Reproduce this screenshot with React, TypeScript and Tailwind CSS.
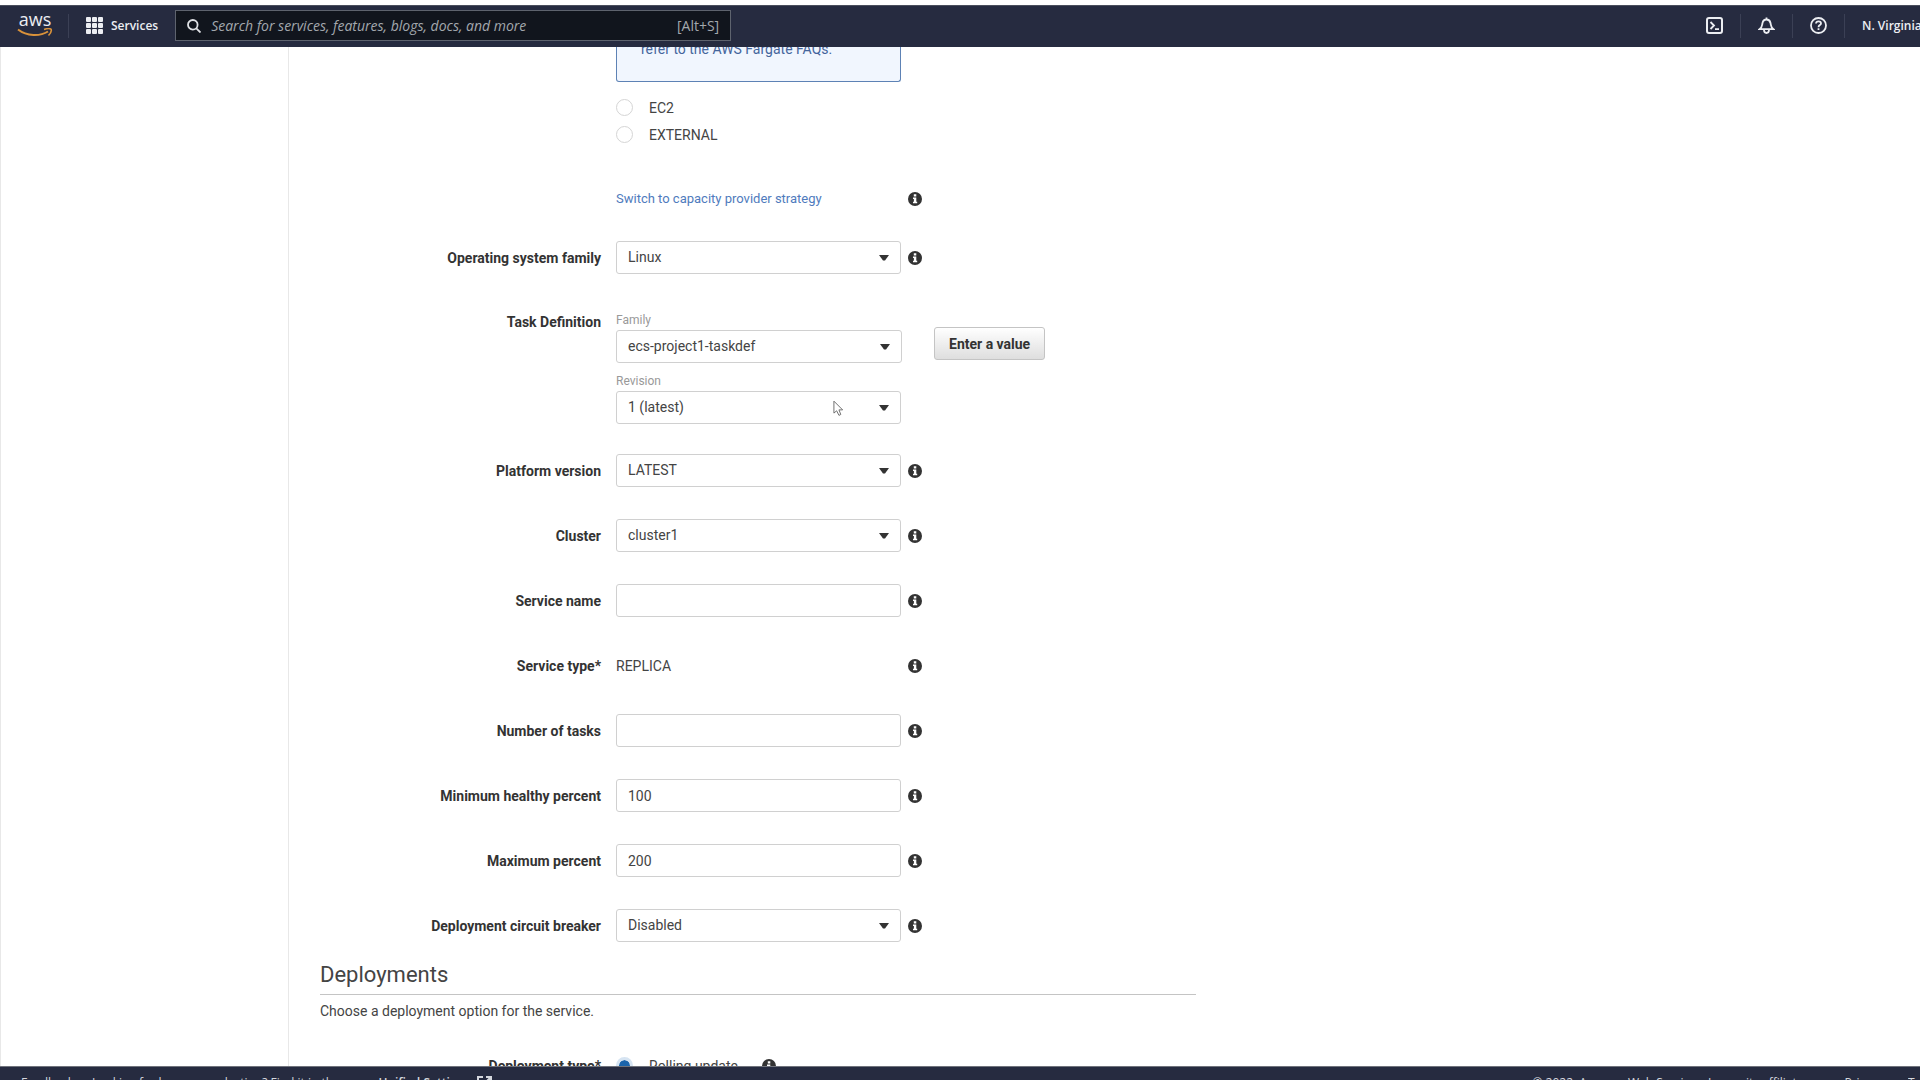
import type { ReactNode } from "react";
import clsx from "clsx";

// ─── Data ─────────────────────────────────────────────────────────────────────

type Field = {
  id: string;
  label: string;
  kind: "select" | "input" | "text";
  value: string;
};

const FIELDS: Field[] = [
  { id: "platform", label: "Platform version", kind: "select", value: "LATEST" },
  { id: "cluster", label: "Cluster", kind: "select", value: "cluster1" },
  { id: "service-name", label: "Service name", kind: "input", value: "" },
  { id: "service-type", label: "Service type*", kind: "text", value: "REPLICA" },
  { id: "tasks", label: "Number of tasks", kind: "input", value: "" },
  { id: "min-percent", label: "Minimum healthy percent", kind: "input", value: "100" },
  { id: "max-percent", label: "Maximum percent", kind: "input", value: "200" },
  { id: "breaker", label: "Deployment circuit breaker", kind: "select", value: "Disabled" },
];

// ─── Icons ────────────────────────────────────────────────────────────────────

function AwsLogo() {
  return (
    <span className="flex w-[36px] flex-col items-center">
      <span className="h-[14px] text-[18px] leading-[10px] font-medium">aws</span>
      <svg viewBox="0 0 36 10" className="h-[10px] w-[36px]" fill="none" aria-hidden="true">
        <path d="M1 1.500C10 8.500 23 8.500 31 3.500" stroke="#d9923a" strokeWidth="2" />
        <path d="M27 1.500C30 0.500 33 0.500 34 1.200C34.600 2.500 33.500 5.500 31.500 7.500" stroke="#d9923a" strokeWidth="1.600" />
      </svg>
    </span>
  );
}

function InfoIcon() {
  return (
    <svg viewBox="0 0 14 14" className="size-[14px] shrink-0" aria-hidden="true">
      <circle cx="7" cy="7" r="7" fill="#333" />
      <path d="M5.800 2.300H8.300V4.400H5.800ZM5 5.400H8.300V9.800H9.200V11.300H5V9.800H5.900V6.900H5Z" fill="#fff" />
    </svg>
  );
}

function InfoButton({ about }: { about: string }) {
  return (
    <button type="button" aria-label={`About ${about}`} className="flex shrink-0">
      <InfoIcon />
    </button>
  );
}

function GridIcon() {
  return (
    <svg viewBox="0 0 17 17" className="size-[17px]" fill="currentColor" aria-hidden="true">
      {[0, 6, 12].map((y) =>
        [0, 6, 12].map((x) => <rect key={`${x}-${y}`} x={x} y={y} width="5" height="5" rx="1" />)
      )}
    </svg>
  );
}

// ─── Form pieces ──────────────────────────────────────────────────────────────

function SelectBox({ id, value, wide }: { id: string; value: string; wide?: boolean }) {
  return (
    <div className={clsx("relative shrink-0", wide ? "w-[286px]" : "w-[285px]")}>
      <select
        id={id}
        defaultValue={value}
        className="block h-[33px] w-full appearance-none rounded-[3px] border border-[#d0d0d0] bg-white pr-8 pb-px pl-[11px] text-[#444]"
      >
        <option>{value}</option>
      </select>
      <svg
        viewBox="0 0 10 6"
        className="pointer-events-none absolute top-[14px] right-3 h-[6px] w-[10px]"
        aria-hidden="true"
      >
        <path d="M0 0H10L6 5.500H4Z" fill="#333" />
      </svg>
    </div>
  );
}

function Row({ label, htmlFor, children }: { label: string; htmlFor?: string; children: ReactNode }) {
  return (
    <div className="flex h-[33px] items-center gap-[7px]">
      <label htmlFor={htmlFor} className="mr-2 w-[281px] shrink-0 text-right font-bold text-[#333]">
        {label}
      </label>
      {children}
    </div>
  );
}

function FieldRow({ field }: { field: Field }) {
  return (
    <Row label={field.label} htmlFor={field.id}>
      {field.kind === "select" && <SelectBox id={field.id} value={field.value} />}
      {field.kind === "input" && (
        <input
          id={field.id}
          type="text"
          defaultValue={field.value}
          className="h-[33px] w-[285px] rounded-[3px] border border-[#d0d0d0] px-[11px] text-[#444]"
        />
      )}
      {field.kind === "text" && (
        <output id={field.id} className="w-[285px]">
          {field.value}
        </output>
      )}
      <InfoButton about={field.label} />
    </Row>
  );
}

function Radio({ label, name, checked }: { label: string; name: string; checked?: boolean }) {
  return (
    <label className="flex h-[27px] items-center gap-4">
      <input
        type="radio"
        name={name}
        defaultChecked={checked}
        className="size-[17px] appearance-none rounded-full border border-[#d5d5d5] bg-white checked:border-[3px] checked:border-[#d6e4f2] checked:bg-[#1b64ab] checked:bg-clip-padding"
      />
      {label}
    </label>
  );
}

// ─── Page chrome ──────────────────────────────────────────────────────────────

function Header() {
  return (
    <header className="flex h-[42px] shrink-0 items-center border-t border-[#4a4e5c] bg-[#262b40] pb-[2px] font-['Open_Sans',sans-serif] text-[#eceef2]">
      <a href="#" aria-label="AWS home" className="ml-[17px]">
        <AwsLogo />
      </a>
      <span className="ml-[15px] h-6 w-px bg-[#3b4055]" />
      <button type="button" className="ml-[17px] flex items-center gap-2 text-[12px] font-semibold">
        <GridIcon />
        Services
      </button>
      <div className="ml-[17px] flex h-[31px] w-[556px] shrink-0 items-center border border-[#5e636e] bg-[#11151d] px-[11px]">
        <svg viewBox="0 0 14 14" className="size-[14px] shrink-0" fill="none" stroke="#e0e2e6" strokeWidth="1.800" aria-hidden="true">
          <circle cx="5.800" cy="5.800" r="4.800" />
          <path d="M9.300 9.300L13.500 13.500" />
        </svg>
        <input
          type="search"
          aria-label="Search"
          placeholder="Search for services, features, blogs, docs, and more"
          className="ml-[10px] min-w-0 flex-1 bg-transparent text-[14px] placeholder:text-[#a3a8ad] placeholder:italic"
        />
        <span className="text-[14px] text-[#a3a8ad]">[Alt+S]</span>
      </div>
      <div className="ml-auto flex shrink-0 items-center">
        <button type="button" aria-label="CloudShell">
          <svg viewBox="0 0 17 17" className="size-[17px]" fill="none" stroke="currentColor" strokeWidth="2" aria-hidden="true">
            <rect x="1" y="1" width="15" height="15" rx="2" />
            <path d="M4.500 5L8 8.500L4.500 12M9 12.200H13" strokeWidth="1.800" />
          </svg>
        </button>
        <span className="mx-[17px] h-6 w-px bg-[#3b4055]" />
        <button type="button" aria-label="Notifications">
          <svg viewBox="0 0 17 17" className="size-[17px]" fill="none" stroke="currentColor" strokeWidth="1.800" aria-hidden="true">
            <path d="M8.500 0.500V2M1.500 12.200C4.500 10 4 8 4.500 6C5 3.800 6.500 2.500 8.500 2.500S12 3.800 12.500 6C13 8 12.500 10 15.500 12.200Z" />
            <path d="M6 13C6.200 17 10.800 17 11 13" />
          </svg>
        </button>
        <span className="mx-[17px] h-6 w-px bg-[#3b4055]" />
        <button type="button" aria-label="Help">
          <svg viewBox="0 0 17 17" className="size-[17px]" fill="none" stroke="currentColor" strokeWidth="1.800" aria-hidden="true">
            <circle cx="8.500" cy="8.500" r="7.500" />
            <path d="M6 6.500C6.200 3.500 11 3.700 11 6.400C11 8.200 8.500 8 8.500 10.200M8.500 11.300V13.100" />
          </svg>
        </button>
        <span className="mx-[17px] h-6 w-px bg-[#3b4055]" />
        <button type="button" className="w-[58px] overflow-hidden text-left text-[12px] font-semibold whitespace-nowrap">
          N. Virginia
        </button>
      </div>
    </header>
  );
}

function Footer() {
  return (
    <footer className="h-[14px] shrink-0 overflow-hidden border-t border-[#70737c] bg-[#262b40] font-['Open_Sans',sans-serif] text-[12px] text-[#d5d8de]">
      <div className="flex h-8 items-center whitespace-nowrap">
        <a href="#" className="ml-[21px]">Feedback</a>
        <span className="ml-[18px]">Looking for language selection? Find it in the new</span>
        <a href="#" className="ml-3 flex items-center gap-[7px] font-semibold">
          Unified Settings
          <svg viewBox="0 0 15 15" className="size-[15px]" fill="none" stroke="currentColor" strokeWidth="2" aria-hidden="true">
            <path d="M6 1H1V14H14V9M9 1H14V6M14 1L7 8" />
          </svg>
        </a>
        <span className="ml-auto">© 2022, Amazon Web Services, Inc. or its affiliates.</span>
        <a href="#" className="ml-8">Privacy</a>
        <a href="#" className="ml-6 w-3 overflow-hidden">Terms</a>
      </div>
    </footer>
  );
}

// ─── Main Component ───────────────────────────────────────────────────────────

export default function App() {
  return (
    <div className="flex h-screen flex-col overflow-hidden bg-white pt-[5px] font-[Roboto,sans-serif] text-[14px] leading-5 text-[#444]">
      <Header />

      <div className="flex min-h-0 flex-1 overflow-hidden">
        <aside className="w-[289px] shrink-0 border-r border-l border-[#e8e8e8]" />

        <main className="min-w-0 flex-1 overflow-hidden pl-[31px]">
          {/* Launch type: tail of the Fargate notice and the remaining options */}
          <div className="flex flex-col pl-[296px]">
            <div className="flex h-[35px] w-[285px] flex-col justify-end overflow-hidden rounded-b-[3px] border border-t-0 border-[#5d82b5] bg-[#f1f6fe] px-6 pb-[22px] text-[#44659c]">
              <p>refer to the AWS Fargate FAQs.</p>
            </div>
            <div className="mt-3">
              <Radio name="launch" label="EC2" />
              <Radio name="launch" label="EXTERNAL" />
            </div>
            <div className="mt-[41px] flex h-5 items-center gap-[7px]">
              <div className="w-[285px] text-[13px]">
                <a href="#" className="text-[#4f7bbd]">Switch to capacity provider strategy</a>
              </div>
              <InfoButton about="capacity provider strategy" />
            </div>
          </div>

          <div className="mt-8">
            <Row label="Operating system family" htmlFor="os-family">
              <SelectBox id="os-family" value="Linux" />
              <InfoButton about="Operating system family" />
            </Row>
          </div>

          {/* Task definition */}
          <div className="mt-9 flex gap-[15px]">
            <h2 className="w-[281px] shrink-0 py-[2px] text-right font-bold text-[#333]">Task Definition</h2>
            <div className="flex flex-col gap-2">
              <div>
                <label htmlFor="family" className="block text-[12px] text-[#999]">Family</label>
                <SelectBox id="family" value="ecs-project1-taskdef" wide />
              </div>
              <div>
                <label htmlFor="revision" className="block text-[12px] text-[#999]">Revision</label>
                <SelectBox id="revision" value="1 (latest)" />
              </div>
            </div>
            <button
              type="button"
              className="mt-[17px] ml-[17px] h-[33px] rounded-[3px] border border-[#c4c4c4] bg-linear-to-b from-white to-[#dedede] px-[14px] font-bold text-[#333]"
            >
              Enter a value
            </button>
          </div>

          <div className="mt-[30px] flex flex-col gap-8">
            {FIELDS.map((field) => (
              <FieldRow key={field.id} field={field} />
            ))}
          </div>

          {/* Deployments */}
          <section className="w-[876px]">
            <h2 className="mt-[19px] border-b border-[#c4c4c4] pb-[5px] text-[22px] leading-7 text-[#444]">Deployments</h2>
            <p className="mt-[6px]">Choose a deployment option for the service.</p>
          </section>
          <div className="mt-7">
            <Row label="Deployment type*">
              <Radio name="deployment" label="Rolling update" checked />
              <span className="ml-[17px] flex">
                <InfoButton about="Deployment type" />
              </span>
            </Row>
          </div>
        </main>
      </div>

      <Footer />

      {/* Mouse pointer */}
      <svg
        viewBox="0 0 12 18"
        className="pointer-events-none absolute top-[400px] left-[833px] h-[17px] w-[11px]"
        fill="#fff"
        stroke="#666"
        aria-hidden="true"
      >
        <path d="M1 1V14L4 11.500L6.500 16.500L8.500 15.500L6.500 10.500H10.500Z" />
      </svg>
    </div>
  );
}
